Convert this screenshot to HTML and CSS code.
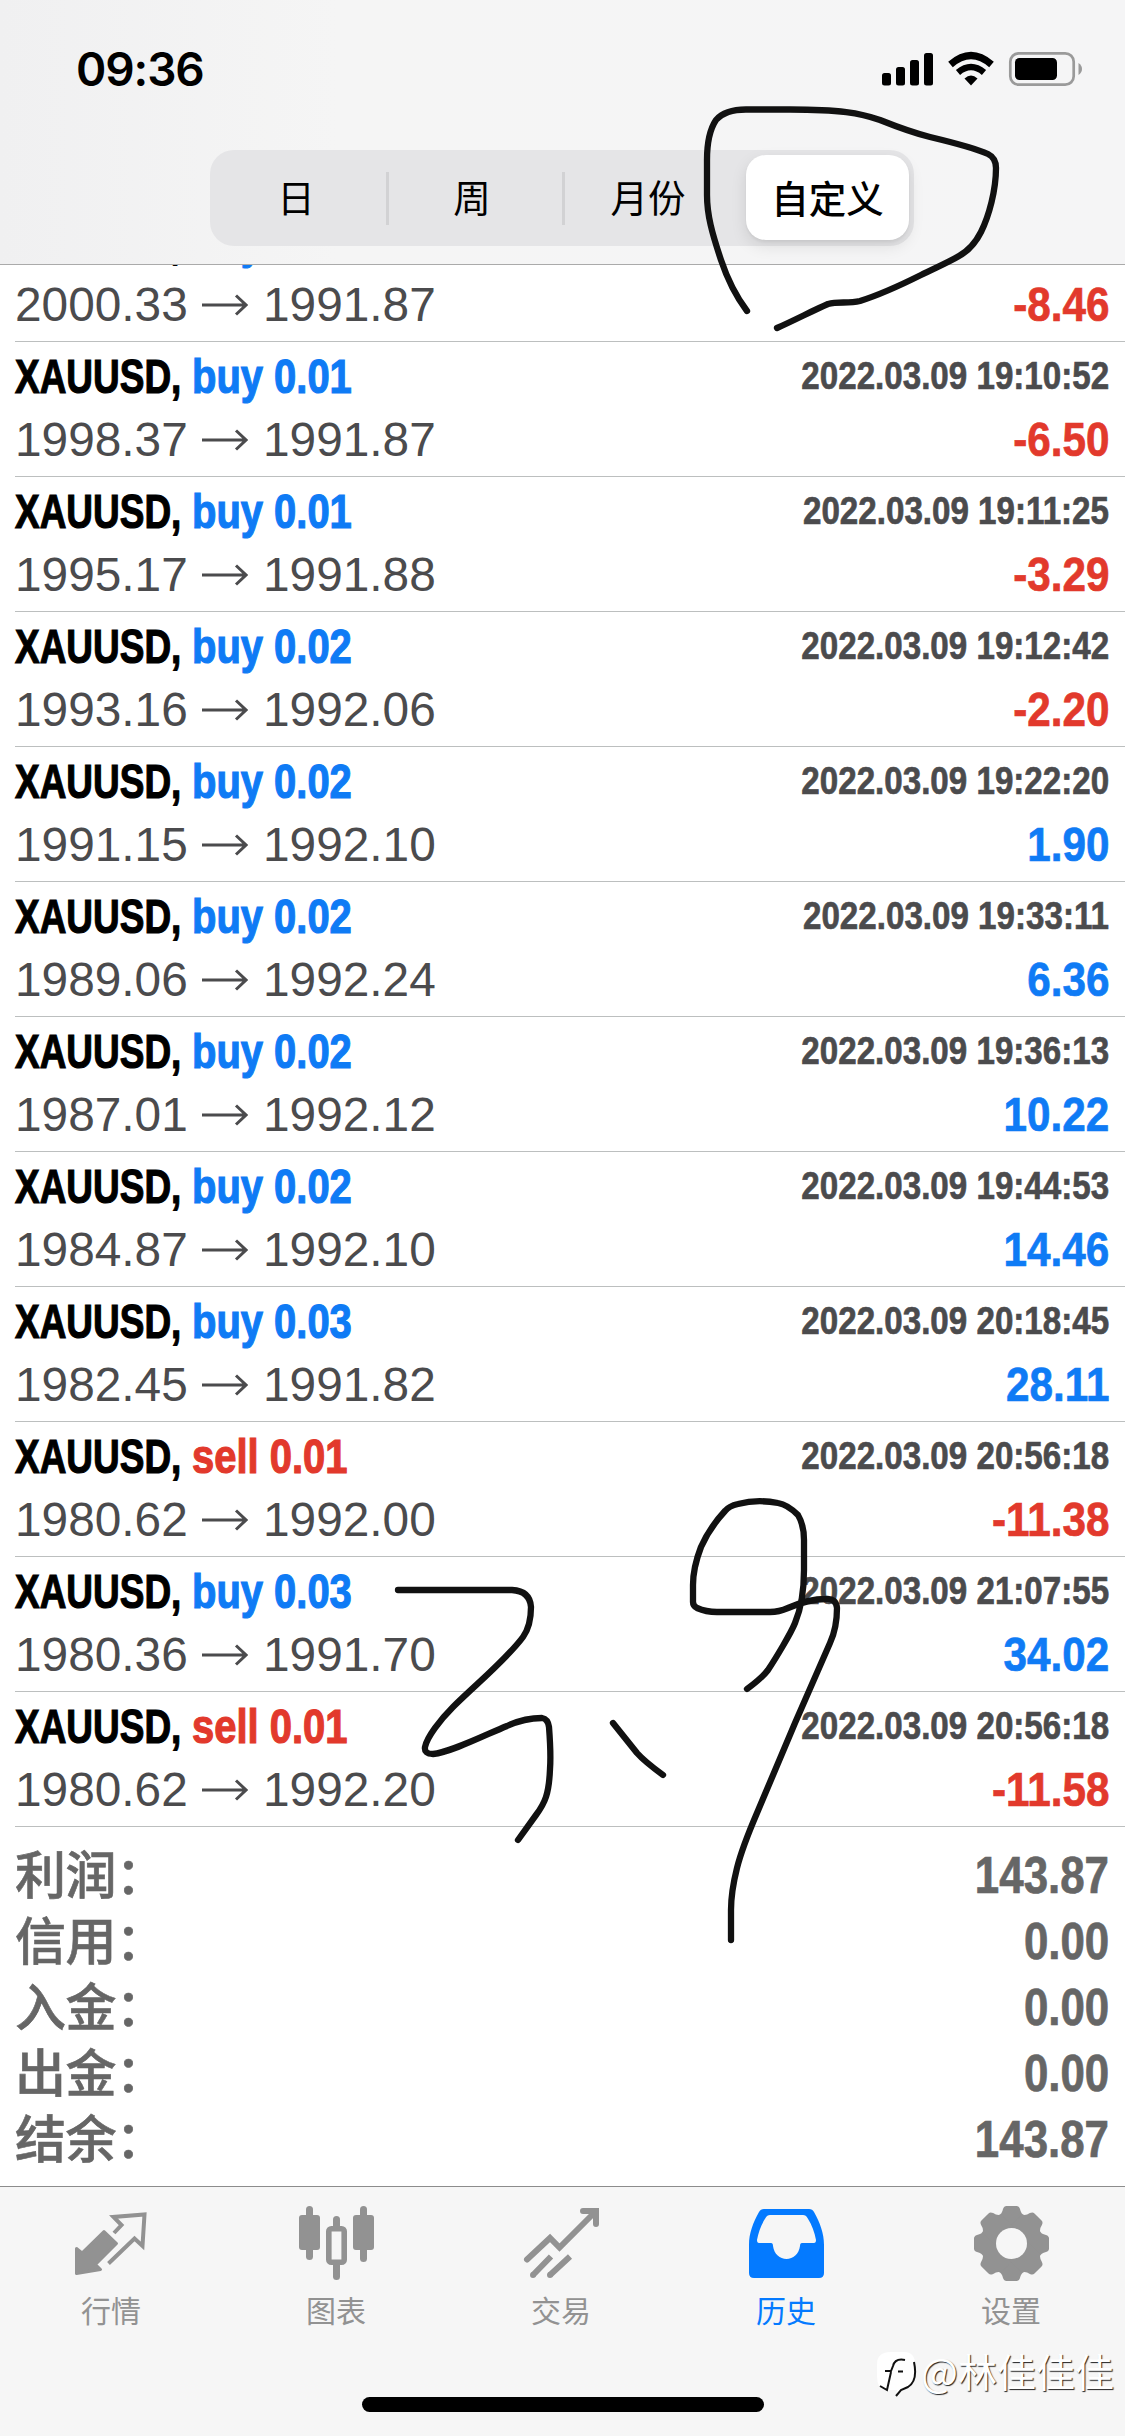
FILE: index.html
```html
<!DOCTYPE html>
<html lang="zh-CN">
<head>
<meta charset="utf-8">
<title>历史</title>
<link rel="stylesheet" href="styles.css">
</head>
<body>
<div class="phone">
  <header class="header">
    <div class="status">
      <span class="clock">09:36</span>
      <svg class="status-icons" viewBox="880 50 204 38" width="204" height="38">
        <rect x="882" y="73" width="9" height="12.500" rx="2.500"/>
        <rect x="896" y="67" width="9" height="18.500" rx="2.500"/>
        <rect x="910" y="60" width="9" height="25.500" rx="2.500"/>
        <rect x="924" y="53" width="9" height="32.500" rx="2.500"/>
        <g fill="none" stroke="#000">
          <path d="M950.500 64.500Q971 46.500 991.500 64.500" stroke-width="7"/>
          <path d="M958 72.500Q971 61.500 984 72.500" stroke-width="6.500"/>
        </g>
        <path d="M964.500 78.500Q971 72.500 977.500 78.500L971 85.500Z"/>
        <rect x="1010.300" y="53.300" width="63.400" height="31.400" rx="8.500" fill="none" stroke="#9a9a9a" stroke-width="2.700"/>
        <rect x="1015" y="58" width="42" height="22" rx="4.500"/>
        <path d="M1078.500 63Q1082 65.500 1082 69T1078.500 75Z" fill="#9a9a9a"/>
      </svg>
    </div>
    <nav class="segments">
      <span class="segment">日</span>
      <span class="segment divided">周</span>
      <span class="segment divided">月份</span>
      <span class="segment selected">自定义</span>
    </nav>
  </header>

  <main class="history">
    <ul class="deals">
      <li class="deal"><div class="line"><span class="title"><b class="symbol">XAUUSD,</b><b class="side buy">buy 0.01</b></span><b class="date">2022.03.09 19:10:21</b></div><div class="line"><span class="prices"><span class="price">2000.33</span><svg class="arrow" viewBox="0 0 46 22"><path d="M0 11H44M34 1.500L44 11L34 20.500"/></svg><span class="price">1991.87</span></span><b class="amount loss">-8.46</b></div></li>
      <li class="deal"><div class="line"><span class="title"><b class="symbol">XAUUSD,</b><b class="side buy">buy 0.01</b></span><b class="date">2022.03.09 19:10:52</b></div><div class="line"><span class="prices"><span class="price">1998.37</span><svg class="arrow" viewBox="0 0 46 22"><path d="M0 11H44M34 1.500L44 11L34 20.500"/></svg><span class="price">1991.87</span></span><b class="amount loss">-6.50</b></div></li>
      <li class="deal"><div class="line"><span class="title"><b class="symbol">XAUUSD,</b><b class="side buy">buy 0.01</b></span><b class="date">2022.03.09 19:11:25</b></div><div class="line"><span class="prices"><span class="price">1995.17</span><svg class="arrow" viewBox="0 0 46 22"><path d="M0 11H44M34 1.500L44 11L34 20.500"/></svg><span class="price">1991.88</span></span><b class="amount loss">-3.29</b></div></li>
      <li class="deal"><div class="line"><span class="title"><b class="symbol">XAUUSD,</b><b class="side buy">buy 0.02</b></span><b class="date">2022.03.09 19:12:42</b></div><div class="line"><span class="prices"><span class="price">1993.16</span><svg class="arrow" viewBox="0 0 46 22"><path d="M0 11H44M34 1.500L44 11L34 20.500"/></svg><span class="price">1992.06</span></span><b class="amount loss">-2.20</b></div></li>
      <li class="deal"><div class="line"><span class="title"><b class="symbol">XAUUSD,</b><b class="side buy">buy 0.02</b></span><b class="date">2022.03.09 19:22:20</b></div><div class="line"><span class="prices"><span class="price">1991.15</span><svg class="arrow" viewBox="0 0 46 22"><path d="M0 11H44M34 1.500L44 11L34 20.500"/></svg><span class="price">1992.10</span></span><b class="amount gain">1.90</b></div></li>
      <li class="deal"><div class="line"><span class="title"><b class="symbol">XAUUSD,</b><b class="side buy">buy 0.02</b></span><b class="date">2022.03.09 19:33:11</b></div><div class="line"><span class="prices"><span class="price">1989.06</span><svg class="arrow" viewBox="0 0 46 22"><path d="M0 11H44M34 1.500L44 11L34 20.500"/></svg><span class="price">1992.24</span></span><b class="amount gain">6.36</b></div></li>
      <li class="deal"><div class="line"><span class="title"><b class="symbol">XAUUSD,</b><b class="side buy">buy 0.02</b></span><b class="date">2022.03.09 19:36:13</b></div><div class="line"><span class="prices"><span class="price">1987.01</span><svg class="arrow" viewBox="0 0 46 22"><path d="M0 11H44M34 1.500L44 11L34 20.500"/></svg><span class="price">1992.12</span></span><b class="amount gain">10.22</b></div></li>
      <li class="deal"><div class="line"><span class="title"><b class="symbol">XAUUSD,</b><b class="side buy">buy 0.02</b></span><b class="date">2022.03.09 19:44:53</b></div><div class="line"><span class="prices"><span class="price">1984.87</span><svg class="arrow" viewBox="0 0 46 22"><path d="M0 11H44M34 1.500L44 11L34 20.500"/></svg><span class="price">1992.10</span></span><b class="amount gain">14.46</b></div></li>
      <li class="deal"><div class="line"><span class="title"><b class="symbol">XAUUSD,</b><b class="side buy">buy 0.03</b></span><b class="date">2022.03.09 20:18:45</b></div><div class="line"><span class="prices"><span class="price">1982.45</span><svg class="arrow" viewBox="0 0 46 22"><path d="M0 11H44M34 1.500L44 11L34 20.500"/></svg><span class="price">1991.82</span></span><b class="amount gain">28.11</b></div></li>
      <li class="deal"><div class="line"><span class="title"><b class="symbol">XAUUSD,</b><b class="side sell">sell 0.01</b></span><b class="date">2022.03.09 20:56:18</b></div><div class="line"><span class="prices"><span class="price">1980.62</span><svg class="arrow" viewBox="0 0 46 22"><path d="M0 11H44M34 1.500L44 11L34 20.500"/></svg><span class="price">1992.00</span></span><b class="amount loss">-11.38</b></div></li>
      <li class="deal"><div class="line"><span class="title"><b class="symbol">XAUUSD,</b><b class="side buy">buy 0.03</b></span><b class="date">2022.03.09 21:07:55</b></div><div class="line"><span class="prices"><span class="price">1980.36</span><svg class="arrow" viewBox="0 0 46 22"><path d="M0 11H44M34 1.500L44 11L34 20.500"/></svg><span class="price">1991.70</span></span><b class="amount gain">34.02</b></div></li>
      <li class="deal"><div class="line"><span class="title"><b class="symbol">XAUUSD,</b><b class="side sell">sell 0.01</b></span><b class="date">2022.03.09 20:56:18</b></div><div class="line"><span class="prices"><span class="price">1980.62</span><svg class="arrow" viewBox="0 0 46 22"><path d="M0 11H44M34 1.500L44 11L34 20.500"/></svg><span class="price">1992.20</span></span><b class="amount loss">-11.58</b></div></li>
    </ul>
    <dl class="totals">
      <div class="total"><dt>利润：</dt><dd>143.87</dd></div>
      <div class="total"><dt>信用：</dt><dd>0.00</dd></div>
      <div class="total"><dt>入金：</dt><dd>0.00</dd></div>
      <div class="total"><dt>出金：</dt><dd>0.00</dd></div>
      <div class="total"><dt>结余：</dt><dd>143.87</dd></div>
    </dl>
  </main>

  <footer class="tabbar">
    <nav class="tabs">
      <div class="tab">
        <svg class="tab-icon" viewBox="0 2200 225 90">
          <path d="M76.500 2248.500L82 2253L104 2231.500L116.500 2243.500L95.500 2264.500L100.500 2269.500L76.500 2273.500Z" fill="currentColor" stroke="currentColor" stroke-width="3" stroke-linejoin="round"/>
          <path d="M114 2233L121.500 2225L113.500 2217L144.500 2214.500L142.500 2246L134.500 2238.500L108.500 2263.500" fill="none" stroke="currentColor" stroke-width="4"/>
        </svg>
        <span>行情</span>
      </div>
      <div class="tab">
        <svg class="tab-icon" viewBox="225 2200 225 90" fill="currentColor">
          <rect x="306" y="2206" width="7" height="54" rx="3.500"/><rect x="299" y="2215" width="21" height="35" rx="3"/>
          <rect x="333" y="2216" width="7" height="20" rx="3.500"/><rect x="333" y="2261" width="7" height="19" rx="3.500"/>
          <path d="M329 2226h15a3 3 0 0 1 3 3v33a3 3 0 0 1-3 3h-15a3 3 0 0 1-3-3v-33a3 3 0 0 1 3-3zM336.500 2232a4.700 4.700 0 0 0-4.700 4.700v17.800a4.700 4.700 0 0 0 9.400 0v-17.800a4.700 4.700 0 0 0-4.700-4.700z" fill="#f6f6f6"/>
          <rect x="328.800" y="2228.800" width="15.400" height="33.400" rx="2.500" fill="#f6f6f6" stroke="currentColor" stroke-width="5.600"/>
          <rect x="360" y="2206" width="7" height="56" rx="3.500"/><rect x="353" y="2215" width="21" height="35" rx="3"/>
        </svg>
        <span>图表</span>
      </div>
      <div class="tab">
        <svg class="tab-icon" viewBox="450 2200 225 90" fill="none" stroke="currentColor" stroke-width="6">
          <path d="M527 2259.500L550 2238L559.500 2247.500L595 2212" stroke-linecap="round"/>
          <path d="M583 2211H596V2224" stroke-linecap="round"/>
          <path d="M533 2275L551 2256.500M550 2275L570 2256.500"/>
          <path d="M533 2275h.01M550 2275h.01" stroke-linecap="round"/>
        </svg>
        <span>交易</span>
      </div>
      <div class="tab active">
        <svg class="tab-icon" viewBox="675 2200 225 90" fill="currentColor">
          <path fill-rule="evenodd" d="M764 2209H809Q812.500 2209 814 2212C820 2223 824 2233 824 2245V2273Q824 2278 819 2278H754Q749 2278 749 2273V2245C749 2233 753 2223 759 2212Q760.500 2209 764 2209ZM770 2215Q767 2215 765.500 2218C761 2225 758.500 2232 757 2240Q757 2243 759 2243H771Q773 2243 773 2246C774 2254 780 2259 786.500 2259S799 2254 800 2246Q800 2243 802 2243H814Q816 2243 816 2240C814.500 2232 812 2225 807.500 2218Q806 2215 803 2215Z"/>
        </svg>
        <span>历史</span>
      </div>
      <div class="tab">
        <svg class="tab-icon" viewBox="900 2200 225 90">
          <g transform="translate(1011.500 2243.500)" fill="currentColor">
            <path id="tooth-pair" d="M-5 -37.500H5Q7.500 -37.500 8.500 -34.500Q9.500 -29.500 13 -28V28Q9.500 29.500 8.500 34.500Q7.500 37.500 5 37.500H-5Q-7.500 37.500 -8.500 34.500Q-9.500 29.500 -13 28V-28Q-9.500 -29.500 -8.500 -34.500Q-7.500 -37.500 -5 -37.500Z"/>
            <use href="#tooth-pair" transform="rotate(45)"/>
            <use href="#tooth-pair" transform="rotate(90)"/>
            <use href="#tooth-pair" transform="rotate(135)"/>
            <circle r="15.500" fill="#f6f6f6"/>
          </g>
        </svg>
        <span>设置</span>
      </div>
    </nav>
    <div class="home-indicator"></div>
  </footer>

  <div class="watermark">
    <svg class="watermark-logo" viewBox="874 2350 42 52" width="42" height="52">
      <path d="M889 2354H902Q913 2354 913 2366V2378Q913 2389 902 2392L894 2399L895 2392H888L886 2393L877 2388Q875 2384 875 2378V2366Q875 2354 889 2354Z" fill="#fff"/>
      <path d="M903 2362Q893 2360 891 2368L889 2373H883M889 2374L885 2392L878 2388M896 2373.500H901M912 2364Q916 2383 906 2389L899 2392L894 2398" fill="none" stroke="#111" stroke-width="2"/>
    </svg>
    <span>@林佳佳佳</span>
  </div>

  <svg class="ink" viewBox="0 0 1125 2436" width="1125" height="2436">
    <path d="M747 311C738 299 728 281 721 260C712 233 707 215 707 195V160C707 140 710 129 716 120C723 112 733 109.500 746 109.500H790C840 109.500 860 113 880 120C900 128 914 133 930 137C955 143 975 148 988 154Q996 158 996 168C996 190 989 216 981 232C976 242 968 251 959 256C949 262 935 268 921 275C899 286 879 295 860 301C848 304 838 301 828 304C814 310 795 320 777 328"/>
    <path d="M398 1590H512Q530 1591 531 1607C531 1618 528 1630 523 1637C506 1660 475 1685 453 1707C440 1720 427 1737 425 1747Q424 1754 433 1754C452 1752 487 1734 507 1726C520 1720 533 1718 542 1718Q548 1719 549 1727C550 1740 551 1755 550 1769C549 1794 545 1803 536 1815L518 1840"/>
    <path d="M613 1723L637 1753Q644 1761 663 1775"/>
    <path d="M747 1689Q762 1678 768 1670C776 1658 791 1633 795 1623C800 1611 804 1595 804 1570V1540C804 1528 801 1520 798 1515C792 1509 784 1504 778 1503Q757 1499 738 1504Q729 1506 725 1511C713 1524 705 1538 701 1547C696 1560 693 1573 693 1585V1602Q693 1606 697 1608Q706 1612 717 1612H770Q779 1612 788 1608C804 1601 815 1599 826 1599Q836 1598 837 1608C837 1620 836 1630 830 1643L795 1723L757 1813Q742 1848 737 1868C732 1888 731 1897 731 1910V1940"/>
  </svg>
</div>
</body>
</html>
```
FILE: styles.css
```css
* {
  box-sizing: border-box;
}

body {
  margin: 0;
  background: #fff;
  font-family: "Liberation Sans", "Noto Sans CJK SC", sans-serif;
}

.phone {
  position: relative;
  display: flex;
  flex-direction: column;
  width: 1125px;
  height: 2436px;
  overflow: hidden;
}

/* Header */
.header {
  flex: none;
  height: 265px;
  border-bottom: 1px solid #aaa;
  background: linear-gradient(90deg, #f0f0f1, #f5f5f5 30%, #f5f5f6);
}

.status {
  display: flex;
  justify-content: space-between;
  height: 150px;
  padding: 50px 41px 0 76px;
}

.clock {
  height: 38px;
  font: 600 46px/38px Inter, sans-serif;
  letter-spacing: -1.1px;
}

.segments {
  display: grid;
  grid-template-columns: repeat(4, 176px);
  width: 704px;
  height: 96px;
  margin-left: 210px;
  border-radius: 24px;
  background: #e5e5e7;
}

.segment {
  display: flex;
  align-items: center;
  justify-content: center;
  height: 96px;
  padding: 0 4px 4px 0;
  font: 400 37.500px/54px "Noto Sans CJK SC", sans-serif;
}

.segment.divided {
  background: linear-gradient(#d2d2d4, #d2d2d4) 0 22px / 3px 53px no-repeat;
}

.segment.selected {
  height: 85px;
  margin: 5px 5px 6px 8px;
  padding: 0 0 1px;
  border-radius: 20px;
  background: #fff;
  box-shadow: 0 6px 16px rgba(0, 0, 0, .1), 0 2px 3px rgba(0, 0, 0, .05);
  font-weight: 500;
}

/* Deals */
.history {
  flex: none;
  height: 1921px;
  overflow: hidden;
}

.deals {
  margin: -58px 0 0;
  padding: 0 0 0 15px;
  list-style: none;
}

.deal {
  height: 135px;
  border-bottom: 1px solid #bcbfbf;
}

.line {
  display: flex;
  justify-content: space-between;
  height: 58px;
  padding-right: 16px;
  font-size: 48px;
  line-height: 58px;
  white-space: nowrap;
}

.line:first-child {
  height: 69px;
  line-height: 69px;
}

.title {
  display: grid;
  grid-template-columns: 177px auto;
}

.symbol,
.side {
  width: 0;
  transform-origin: left;
  -webkit-text-stroke: 1.2px currentColor;
}

.symbol {
  transform: scaleX(.77);
}

.side {
  transform: scaleX(.832);
}

.date {
  color: #4b4b4d;
  font-size: 39px;
  line-height: 67px;
  transform: scaleX(.85);
  transform-origin: right;
  -webkit-text-stroke: .7px currentColor;
}

.prices {
  display: flex;
  align-items: center;
  color: #4b4b4d;
}

.price {
  width: 187px;
  font-size: 47.800px;
}

.arrow {
  width: 46px;
  height: 22px;
  margin-right: 15px;
  fill: none;
  stroke: #4b4b4d;
  stroke-width: 3;
}

.amount {
  transform: scaleX(.88);
  transform-origin: right;
  -webkit-text-stroke: .7px currentColor;
}

.buy,
.gain {
  color: #0f7bf5;
}

.sell,
.loss {
  color: #e2392c;
}

/* Totals */
.totals {
  margin: 0;
  padding: 16px 16px 0 15px;
}

.total {
  display: flex;
  justify-content: space-between;
  height: 66px;
  color: #666;
  font-size: 51px;
  font-weight: 700;
  line-height: 66px;
}

.total dt {
  margin-top: -4px;
  font-family: "Noto Sans CJK SC", sans-serif;
  font-weight: 500;
  letter-spacing: -.6px;
  -webkit-text-stroke: .6px currentColor;
}

.total dd {
  margin: 0;
  transform: scaleX(.86);
  transform-origin: right;
  -webkit-text-stroke: .7px currentColor;
}

/* Tab bar */
.tabbar {
  flex: 1;
  border-top: 1px solid #8c8c8c;
  background: #f6f6f6;
}

.tabs {
  display: grid;
  grid-template-columns: repeat(5, 225px);
  height: 210px;
  padding-top: 13px;
}

.tab {
  display: flex;
  flex-direction: column;
  align-items: center;
  color: #929292;
  font: 400 30px/38px "Noto Sans CJK SC", sans-serif;
}

.tab span {
  padding-right: 3px;
}

.tab.active {
  color: #047aff;
}

.tab-icon {
  width: 225px;
  height: 90px;
}

.home-indicator {
  width: 402px;
  height: 15px;
  margin: 0 auto;
  border-radius: 8px;
  background: #000;
}

/* Overlays */
.watermark {
  position: absolute;
  right: 11px;
  bottom: 36px;
  display: flex;
  align-items: center;
  gap: 3px;
  color: #fff;
  font: 400 39px/44px "Noto Sans CJK SC", sans-serif;
  text-shadow: 1px 1px 1px #222;
}

.watermark span {
  padding-bottom: 8px;
}

.ink {
  position: absolute;
  inset: 0;
  fill: none;
  stroke: #111;
  stroke-width: 6.3;
  stroke-linecap: round;
  stroke-linejoin: round;
}
```
